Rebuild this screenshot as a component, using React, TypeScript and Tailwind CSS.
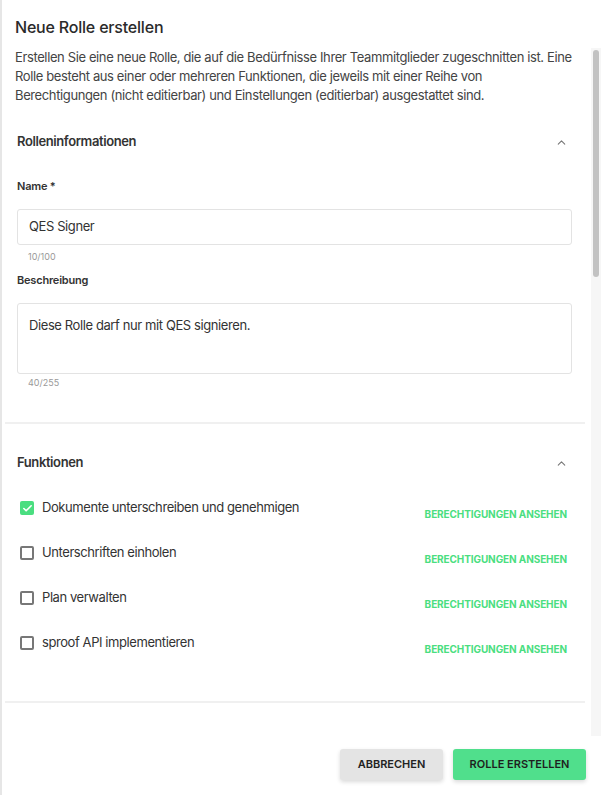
import { ChevronUp, Check } from "lucide-react";

type Funktion = {
  label: string;
  checked: boolean;
};

const funktionen: Funktion[] = [
  { label: "Dokumente unterschreiben und genehmigen", checked: true },
  { label: "Unterschriften einholen", checked: false },
  { label: "Plan verwalten", checked: false },
  { label: "sproof API implementieren", checked: false },
];

const SectionHeader = ({ title }: { title: string }) => (
  <div className="flex items-center justify-between pl-[15px] pr-[23px] h-[40px]">
    <h3 className="text-[13px] font-semibold text-[#333] tracking-[-0.4px]">{title}</h3>
    <ChevronUp className="w-[13px] h-[13px] text-[#777]" strokeWidth={2} />
  </div>
);

const Checkbox = ({ checked }: { checked: boolean }) =>
  checked ? (
    <span className="flex items-center justify-center w-[14px] h-[14px] rounded-[2px] bg-[#4ade80]">
      <Check className="w-[11px] h-[11px] text-white" strokeWidth={3.5} />
    </span>
  ) : (
    <span className="block w-[14px] h-[14px] rounded-[2px] border-2 border-[#777]" />
  );

const App = () => {
  return (
    <div className="w-[601px] h-[795px] flex flex-col bg-white border-l-2 border-[#e6e6e6] font-['Inter',sans-serif] text-[#333] overflow-hidden">
      <div className="pl-[13px] pt-[16px] h-[48px]">
        <h2 className="text-[16px] font-medium leading-[22px] text-[#2a2a2a] tracking-[-0.2px]">Neue Rolle erstellen</h2>
      </div>

      <div className="flex h-[688px]">
        <div className="flex-1 overflow-hidden">
          <p className="pl-[13px] pr-[6px] text-[13px] leading-[19px] text-[#444] tracking-[-0.38px]">
            Erstellen Sie eine neue Rolle, die auf die Bedürfnisse Ihrer Teammitglieder zugeschnitten ist. Eine
            <br />
            Rolle besteht aus einer oder mehreren Funktionen, die jeweils mit einer Reihe von
            <br />
            Berechtigungen (nicht editierbar) und Einstellungen (editierbar) ausgestattet sind.
          </p>

          <div className="mt-[17px]">
            <SectionHeader title="Rolleninformationen" />
            <div className="pl-[15px] pr-[19px] pt-[16px]">
              <label className="block text-[11px] font-semibold text-[#333] leading-[16px] tracking-[-0.2px]">Name *</label>
              <div className="mt-[15px] h-[36px] flex items-center px-[11px] border border-[#e3e3e3] rounded-[3px] text-[13px] text-[#333] tracking-[-0.4px]">
                QES Signer
              </div>
              <div className="mt-[6px] pl-[11px] text-[9px] text-[#999] leading-[12px]">10/100</div>

              <label className="block mt-[9px] text-[11px] font-semibold text-[#333] leading-[16px] tracking-[-0.2px]">Beschreibung</label>
              <div className="mt-[15px] h-[71px] px-[11px] pt-[12px] border border-[#e3e3e3] rounded-[3px] text-[13px] text-[#333] leading-[19px] tracking-[-0.4px]">
                Diese Rolle darf nur mit QES signieren.
              </div>
              <div className="mt-[3px] pl-[11px] text-[9px] text-[#999] leading-[12px]">40/255</div>
            </div>
          </div>

          <div className="mt-[33px] ml-[3px] mr-[6px] h-[2px] bg-[#f0f0f0]" />

          <div className="mt-[19px]">
            <SectionHeader title="Funktionen" />
            <div className="pl-[18px] pr-[24px] pt-[16px] flex flex-col gap-[14px]">
              {funktionen.map((f) => (
                <div key={f.label} className="flex items-start justify-between h-[31px]">
                  <div className="flex items-center gap-[8px] h-[18px]">
                    <Checkbox checked={f.checked} />
                    <span className="text-[13px] text-[#333] tracking-[-0.42px]">{f.label}</span>
                  </div>
                  <button className="mt-[8px] text-[10px] font-bold text-[#4ade80] tracking-[-0.1px] leading-[14px]">
                    BERECHTIGUNGEN ANSEHEN
                  </button>
                </div>
              ))}
            </div>
          </div>

          <div className="mt-[36px] ml-[3px] mr-[6px] h-[2px] bg-[#f0f0f0]" />
        </div>

        {/* scrollbar */}
        <div className="w-[10px] bg-[#f6f6f6] pt-[2px] flex justify-center">
          <div className="w-[6px] h-[227px] rounded-full bg-[#c2c2c2]" />
        </div>
      </div>

      <div className="flex-1 flex items-start justify-end gap-[10px] pr-[15px] pt-[13px]">
        <button className="h-[31px] w-[103px] rounded-[3px] bg-[#e4e4e4] text-[11px] font-semibold text-[#222] shadow-[0_2px_4px_rgba(0,0,0,0.15)]">
          ABBRECHEN
        </button>
        <button className="h-[31px] w-[133px] rounded-[3px] bg-[#50df8c] text-[11px] font-semibold text-[#1f1f1f] shadow-[0_2px_4px_rgba(0,0,0,0.15)]">
          ROLLE ERSTELLEN
        </button>
      </div>
    </div>
  );
};

export default App;
